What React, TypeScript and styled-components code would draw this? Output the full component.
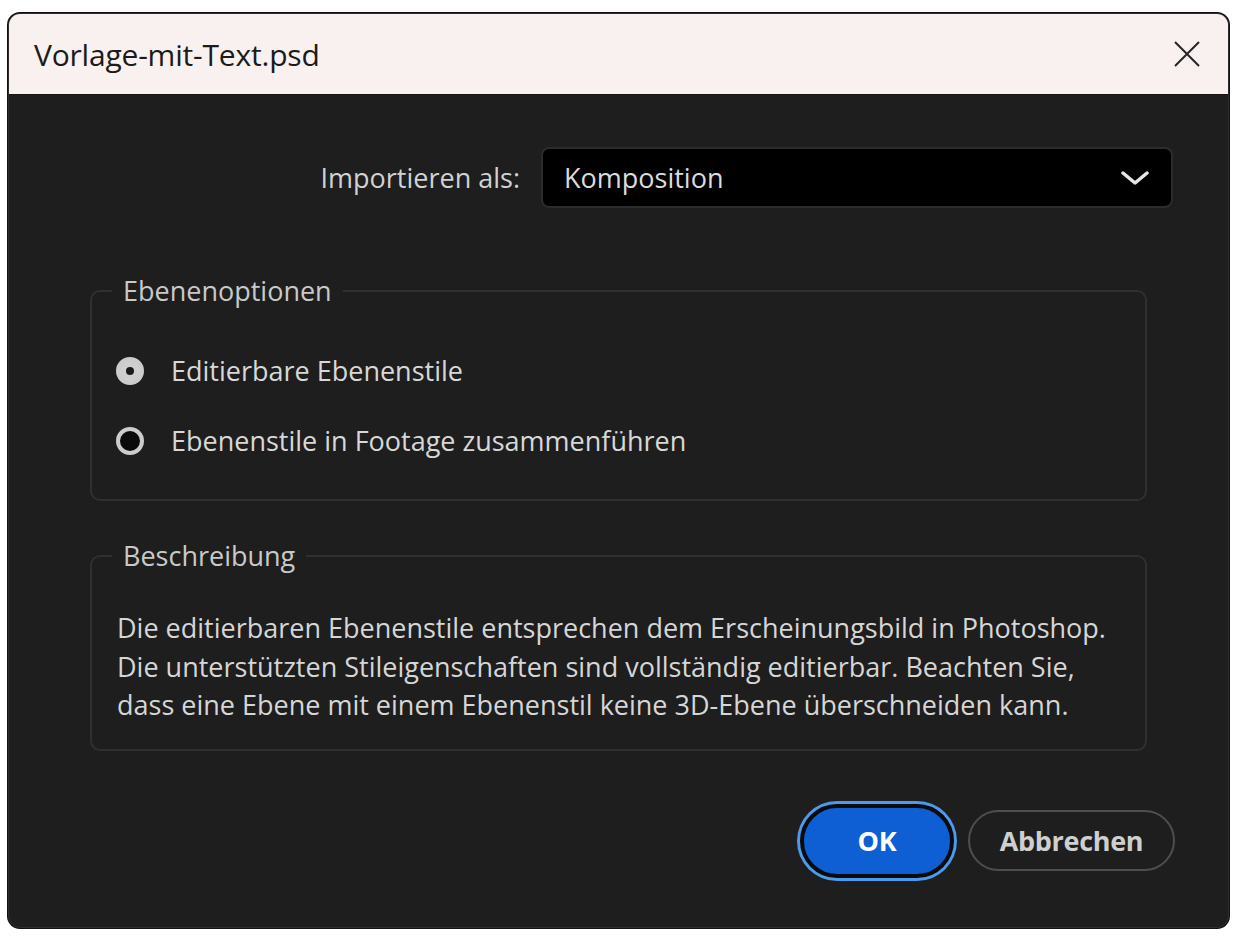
import styled, { createGlobalStyle } from "styled-components";

const GlobalStyle = createGlobalStyle`
  html, body {
    margin: 0;
    padding: 0;
    background: #ffffff;
    font-family: "Open Sans", "Noto Sans", Arial, sans-serif;
  }
`;

const Page = styled.div`
  width: 1244px;
  height: 938px;
  padding: 13px 15px 10px 8px;
  box-sizing: border-box;
`;

const Dialog = styled.div`
  width: 1221px;
  height: 915px;
  display: flex;
  flex-direction: column;
  background: #1e1e1e;
  border: 1px solid #2e2e2e;
  border-radius: 12px;
  overflow: hidden;
  box-sizing: border-box;
  box-shadow: 0 0 0 1px #111;
`;

const TitleBar = styled.div`
  height: 80px;
  flex: none;
  display: flex;
  align-items: center;
  justify-content: space-between;
  padding: 0 26px 0 25px;
  background: #f8f1ef;
  border-bottom: 1px solid #161616;
`;

const Title = styled.div`
  font-size: 30px;
  color: #1b1b1b;
  letter-spacing: -0.2px;
`;

const CloseButton = styled.button`
  width: 30px;
  height: 30px;
  padding: 0;
  border: none;
  background: transparent;
  display: flex;
  align-items: center;
  justify-content: center;
`;

const Body = styled.div`
  flex: 1;
  display: flex;
  flex-direction: column;
  padding: 52px 55px 0 81px;
`;

const ImportRow = styled.div`
  display: flex;
  align-items: center;
  justify-content: flex-end;
  gap: 21px;
`;

const Label = styled.span`
  font-size: 27px;
  color: #d2d2d2;
`;

const Select = styled.div`
  width: 632px;
  height: 61px;
  box-sizing: border-box;
  display: flex;
  align-items: center;
  justify-content: space-between;
  padding: 0 22px 0 21px;
  background: #000;
  border: 2px solid #2c2c2c;
  border-radius: 8px;
  font-size: 27px;
  color: #dcdcdc;
`;

const Group = styled.fieldset<{ $gap: number }>`
  margin: ${(p) => p.$gap}px 26px 0 0;
  padding: 0 20px;
  border: 2px solid #303030;
  border-radius: 10px;
  min-width: 0;
`;

const Legend = styled.legend`
  padding: 0 11px;
  font-size: 27px;
  line-height: 30px;
  color: #c9c9c9;
`;

const RadioList = styled.div`
  display: flex;
  flex-direction: column;
  gap: 33px;
  padding: 46px 0 40px 4px;
`;

const RadioRow = styled.label`
  display: flex;
  align-items: center;
  gap: 27px;
  font-size: 27px;
  color: #d8d8d8;
`;

const RadioMark = styled.span<{ $checked: boolean }>`
  width: 28px;
  height: 28px;
  box-sizing: border-box;
  border-radius: 50%;
  flex: none;
  display: flex;
  align-items: center;
  justify-content: center;
  background: ${(p) => (p.$checked ? "#cfcfcf" : "#0b0b0b")};
  border: 4px solid #cccccc;

  &::after {
    content: "";
    width: 8px;
    height: 8px;
    border-radius: 50%;
    background: ${(p) => (p.$checked ? "#1a1a1a" : "transparent")};
  }
`;

const Description = styled.p`
  margin: 0;
  padding: 38px 0 24px 5px;
  font-size: 27px;
  line-height: 38.5px;
  color: #d6d6d6;
`;

const Footer = styled.div`
  display: flex;
  justify-content: flex-end;
  align-items: center;
  gap: 14px;
  margin-top: 53px;
  margin-right: -2px;
`;

const Button = styled.button<{ $primary?: boolean; $width: number }>`
  width: ${(p) => p.$width}px;
  height: ${(p) => (p.$primary ? "74px" : "61px")};
  box-sizing: border-box;
  padding: 0;
  border-radius: 40px;
  font-family: inherit;
  font-size: 27px;
  font-weight: 700;
  letter-spacing: -0.3px;
  color: ${(p) => (p.$primary ? "#ffffff" : "#cfcfcf")};
  background: ${(p) => (p.$primary ? "#0d5fd3" : "transparent")};
  border: ${(p) => (p.$primary ? "4px solid #0b0b0b" : "2px solid #4e4e4e")};
  box-shadow: ${(p) => (p.$primary ? "0 0 0 3px #4a9bf0" : "none")};
`;

export default function App() {
  return (
    <>
      <GlobalStyle />
      <Page>
        <Dialog>
          <TitleBar>
            <Title>Vorlage-mit-Text.psd</Title>
            <CloseButton aria-label="Schließen">
              <svg width="28" height="28" viewBox="0 0 28 28">
                <path d="M2 2 L26 26 M26 2 L2 26" stroke="#262626" strokeWidth="2" fill="none" />
              </svg>
            </CloseButton>
          </TitleBar>
          <Body>
            <ImportRow>
              <Label>Importieren als:</Label>
              <Select>
                <span>Komposition</span>
                <svg width="28" height="16" viewBox="0 0 28 16">
                  <path d="M2 3 L14 13 L26 3" stroke="#e6e6e6" strokeWidth="3.5" fill="none" strokeLinecap="round" strokeLinejoin="round" />
                </svg>
              </Select>
            </ImportRow>

            <Group $gap={68}>
              <Legend>Ebenenoptionen</Legend>
              <RadioList>
                <RadioRow>
                  <RadioMark $checked />
                  Editierbare Ebenenstile
                </RadioRow>
                <RadioRow>
                  <RadioMark $checked={false} />
                  Ebenenstile in Footage zusammenführen
                </RadioRow>
              </RadioList>
            </Group>

            <Group $gap={40}>
              <Legend>Beschreibung</Legend>
              <Description>
                Die editierbaren Ebenenstile entsprechen dem Erscheinungsbild in Photoshop.
                <br />
                Die unterstützten Stileigenschaften sind vollständig editierbar. Beachten Sie,
                <br />
                dass eine Ebene mit einem Ebenenstil keine 3D-Ebene überschneiden kann.
              </Description>
            </Group>

            <Footer>
              <Button $primary $width={154}>OK</Button>
              <Button $width={207}>Abbrechen</Button>
            </Footer>
          </Body>
        </Dialog>
      </Page>
    </>
  );
}
